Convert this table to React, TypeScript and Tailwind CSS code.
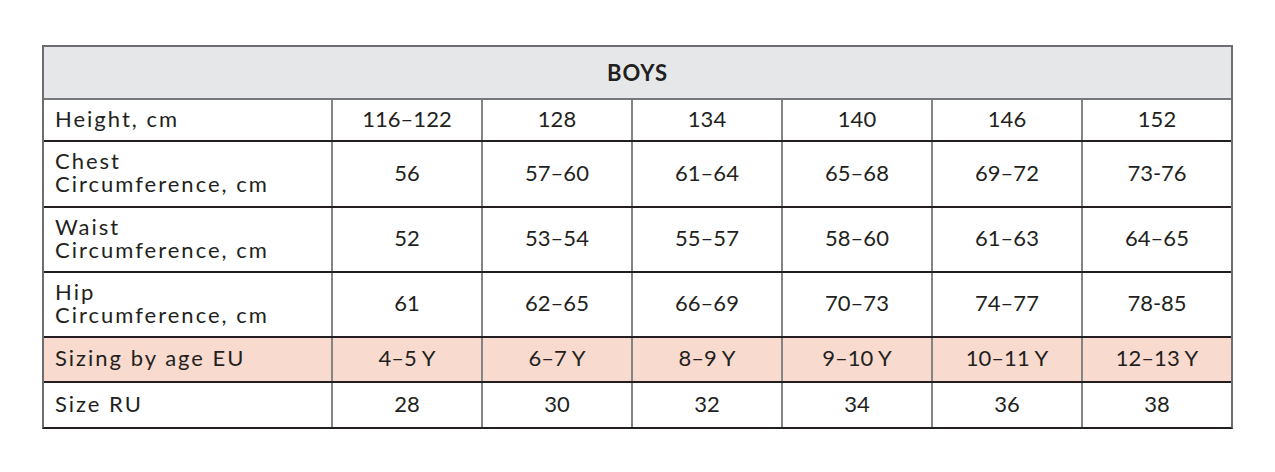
import React from "react";

const cols = ["116–122", "128", "134", "140", "146", "152"];

const rows: { label: string[]; values: string[]; h: string; pink?: boolean }[] = [
  { label: ["Chest", "Circumference, cm"], values: ["56", "57–60", "61–64", "65–68", "69–72", "73-76"], h: "h-[66px]" },
  { label: ["Waist", "Circumference, cm"], values: ["52", "53–54", "55–57", "58–60", "61–63", "64–65"], h: "h-[65px]" },
  { label: ["Hip", "Circumference, cm"], values: ["61", "62–65", "66–69", "70–73", "74–77", "78-85"], h: "h-[65px]" },
  { label: ["Sizing by age EU"], values: ["4–5 Y", "6–7 Y", "8–9 Y", "9–10 Y", "10–11 Y", "12–13 Y"], h: "h-[45px]", pink: true },
];

function Row({ label, values, h, pink, last }: { label: string[]; values: string[]; h: string; pink?: boolean; last?: boolean }) {
  return (
    <div className={`grid grid-cols-[1fr_repeat(6,150px)] ${h} ${last ? "" : "border-b-2 border-[#231f20]"} ${pink ? "bg-[#f9dace]" : ""}`}>
      <div className="flex flex-col justify-center pl-[11px] pb-[4px] leading-[23px] tracking-[2px]">
        {label.map((l) => (
          <span key={l}>{l}</span>
        ))}
      </div>
      {values.map((v, i) => (
        <div key={i} className="flex items-center justify-center pb-[4px] border-l-2 border-[#838485]">
          {v}
        </div>
      ))}
    </div>
  );
}

export default function App() {
  return (
    <div className="w-[1275px] h-[472px] bg-white pt-[45px] pl-[42px]">
      <div
        className="w-[1191px] border-2 border-b-[#231f20] border-[#6d6e71] text-[22px] text-[#231f20]"
        style={{ fontFamily: "Lato, 'Noto Sans', sans-serif" }}
      >
        <div className="h-[53px] bg-[#e6e7e8] border-b-2 border-[#77787b] flex items-center justify-center font-bold text-[22px] tracking-[1px]">
          BOYS
        </div>
        <Row label={["Height, cm"]} values={cols} h="h-[42px]" />
        {rows.map((r) => (
          <Row key={r.label[0]} {...r} />
        ))}
        <Row label={["Size RU"]} values={["28", "30", "32", "34", "36", "38"]} h="h-[44px]" last />
      </div>
    </div>
  );
}
